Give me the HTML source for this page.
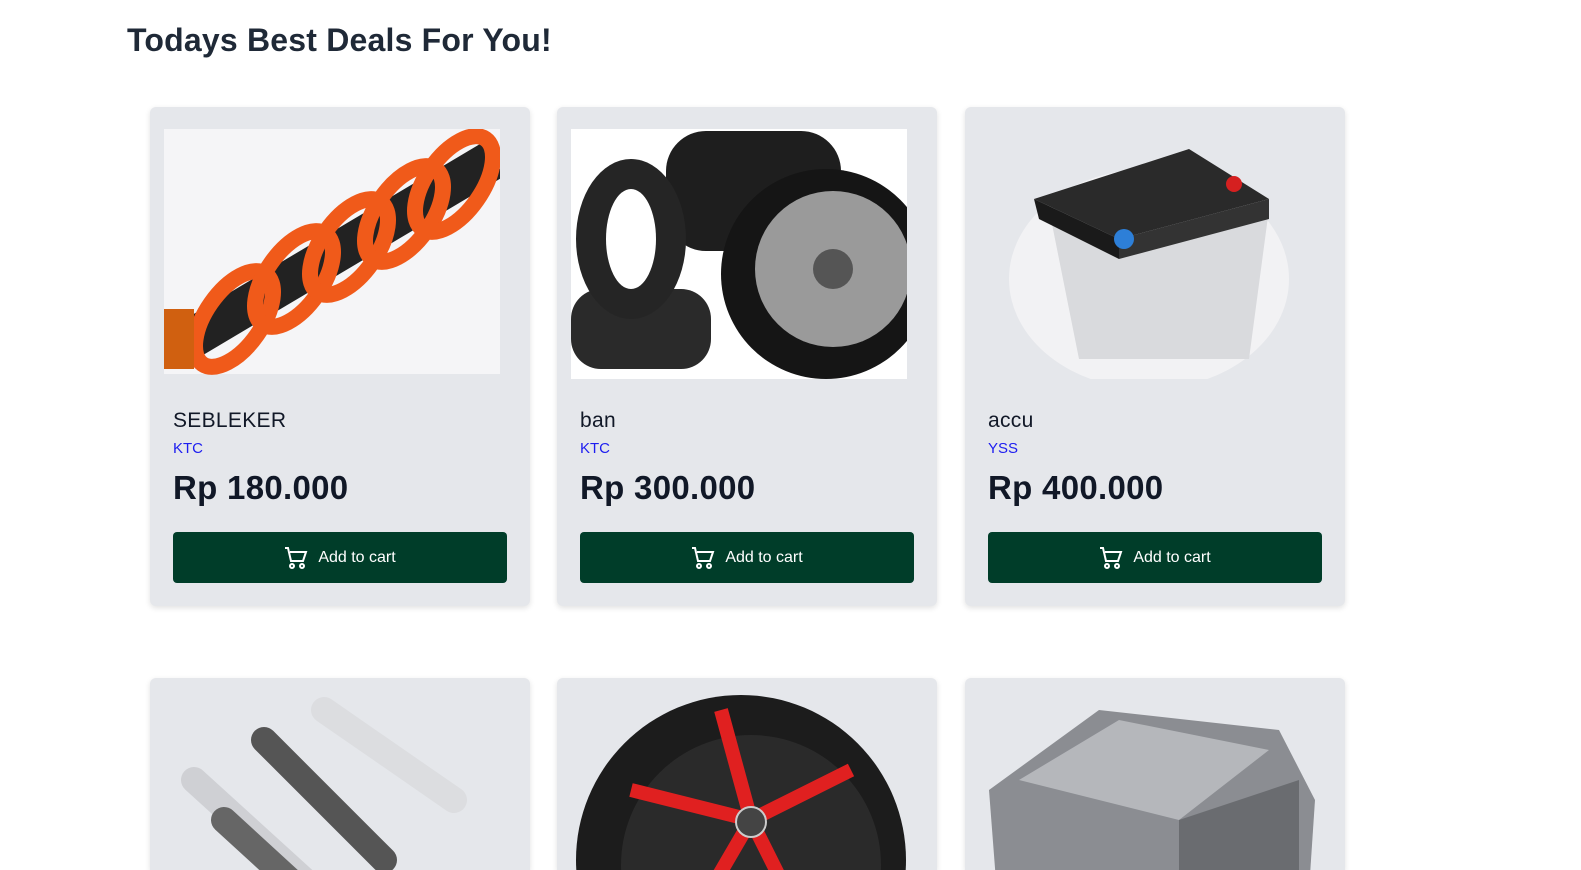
<!DOCTYPE html>
<html><head><meta charset="utf-8"><style>
*{margin:0;padding:0;box-sizing:border-box}
html,body{width:1581px;height:870px;overflow:hidden}
body{background:#fff;font-family:"Liberation Sans",sans-serif;color:#111827;position:relative}
h1{position:absolute;left:127px;top:22px;font-size:32px;font-weight:600;letter-spacing:0.2px;color:#1f2937}
.card{position:absolute;width:380px;height:499px;background:#e5e7eb;border-radius:6px;box-shadow:0 2px 6px rgba(0,0,0,.12);overflow:hidden}
.card.b{height:192px;border-radius:6px 6px 0 0}
.img{position:absolute;left:14px;top:22px;width:336px;height:250px}
.name{position:absolute;left:23px;top:302px;font-size:21px;letter-spacing:0.3px}
.brand{position:absolute;left:23px;top:333px;font-size:15px;color:#1d1df0}
.price{position:absolute;left:23px;top:362px;font-size:33px;font-weight:600;letter-spacing:0.3px}
.btn{position:absolute;left:23px;top:425px;width:334px;height:51px;background:#003d29;border-radius:4px;color:#fff;font-size:16px;display:flex;align-items:center;justify-content:center;gap:10px}
</style></head><body>
<h1>Todays Best Deals For You!</h1>

<div class="card" style="left:150px;top:107px">
<svg class="img" viewBox="0 0 336 250"><rect x="0" y="0" width="336" height="245" fill="#fff" opacity=".6"/><line x1="10" y1="220" x2="330" y2="30" stroke="#222" stroke-width="40"/><g fill="none" stroke="#f05a1a" stroke-width="16"><ellipse cx="70" cy="190" rx="28" ry="55" transform="rotate(35 70 190)"/><ellipse cx="130" cy="150" rx="28" ry="55" transform="rotate(35 130 150)"/><ellipse cx="185" cy="118" rx="28" ry="55" transform="rotate(35 185 118)"/><ellipse cx="240" cy="85" rx="28" ry="55" transform="rotate(35 240 85)"/><ellipse cx="290" cy="55" rx="28" ry="55" transform="rotate(35 290 55)"/></g><rect x="0" y="180" width="30" height="60" fill="#d06010"/></svg>
<div class="name">SEBLEKER</div><div class="brand">KTC</div><div class="price">Rp 180.000</div>
<div class="btn"><svg width="24" height="24" viewBox="0 0 24 24" fill="none" stroke="#fff" stroke-width="2"><path d="M1 2h3l3 13h12l3-9H6"/><circle cx="8" cy="20" r="2"/><circle cx="18" cy="20" r="2"/></svg>Add to cart</div></div>

<div class="card" style="left:557px;top:107px">
<svg class="img" viewBox="0 0 336 250"><rect width="336" height="250" fill="#fff"/><rect x="95" y="2" width="175" height="120" rx="40" fill="#1e1e1e"/><rect x="0" y="160" width="140" height="80" rx="30" fill="#2a2a2a"/><ellipse cx="60" cy="110" rx="55" ry="80" fill="#252525"/><ellipse cx="60" cy="110" rx="25" ry="50" fill="#fff"/><circle cx="255" cy="145" r="105" fill="#151515"/><circle cx="262" cy="140" r="78" fill="#9a9a9a"/><circle cx="262" cy="140" r="20" fill="#555"/></svg>
<div class="name">ban</div><div class="brand">KTC</div><div class="price">Rp 300.000</div>
<div class="btn"><svg width="24" height="24" viewBox="0 0 24 24" fill="none" stroke="#fff" stroke-width="2"><path d="M1 2h3l3 13h12l3-9H6"/><circle cx="8" cy="20" r="2"/><circle cx="18" cy="20" r="2"/></svg>Add to cart</div></div>

<div class="card" style="left:965px;top:107px">
<svg class="img" viewBox="0 0 336 250"><ellipse cx="170" cy="150" rx="140" ry="110" fill="#f2f2f4"/><path d="M70 80 L290 80 L270 230 L100 230 Z" fill="#d9dadd"/><path d="M55 70 L210 20 L290 70 L140 110 Z" fill="#2a2a2a"/><path d="M55 70 L140 110 L140 130 L60 90Z" fill="#1a1a1a"/><path d="M140 110 L290 70 L290 90 L140 130Z" fill="#333"/><circle cx="145" cy="110" r="10" fill="#2d7fd8"/><circle cx="255" cy="55" r="8" fill="#d52020"/></svg>
<div class="name">accu</div><div class="brand">YSS</div><div class="price">Rp 400.000</div>
<div class="btn"><svg width="24" height="24" viewBox="0 0 24 24" fill="none" stroke="#fff" stroke-width="2"><path d="M1 2h3l3 13h12l3-9H6"/><circle cx="8" cy="20" r="2"/><circle cx="18" cy="20" r="2"/></svg>Add to cart</div></div>

<div class="card b" style="left:150px;top:678px">
<svg class="img" style="top:12px" viewBox="0 0 336 250"><g stroke-width="26" stroke-linecap="round"><line x1="30" y1="90" x2="140" y2="190" stroke="#cfd0d4"/><line x1="100" y1="50" x2="220" y2="170" stroke="#555"/><line x1="160" y1="20" x2="290" y2="110" stroke="#dcdde0"/><line x1="60" y1="130" x2="180" y2="240" stroke="#666"/></g></svg></div>

<div class="card b" style="left:557px;top:678px">
<svg class="img" style="top:12px" viewBox="0 0 336 250"><circle cx="170" cy="170" r="165" fill="#1c1c1c"/><circle cx="180" cy="175" r="130" fill="#2a2a2a"/><g stroke="#e02020" stroke-width="14"><line x1="180" y1="130" x2="150" y2="20"/><line x1="180" y1="130" x2="280" y2="80"/><line x1="180" y1="130" x2="60" y2="100"/><line x1="180" y1="130" x2="240" y2="250"/><line x1="180" y1="130" x2="110" y2="250"/></g><circle cx="180" cy="132" r="15" fill="#444" stroke="#ccc" stroke-width="2"/></svg></div>

<div class="card b" style="left:965px;top:678px">
<svg class="img" style="top:12px" viewBox="0 0 336 250"><path d="M10 100 L120 20 L300 40 L336 110 L330 200 L180 250 L20 230Z" fill="#8b8d92"/><path d="M40 90 L140 30 L290 60 L200 130Z" fill="#b5b7bb"/><path d="M200 130 L320 90 L320 200 L200 240Z" fill="#6a6c70"/></svg></div>
</body></html>
